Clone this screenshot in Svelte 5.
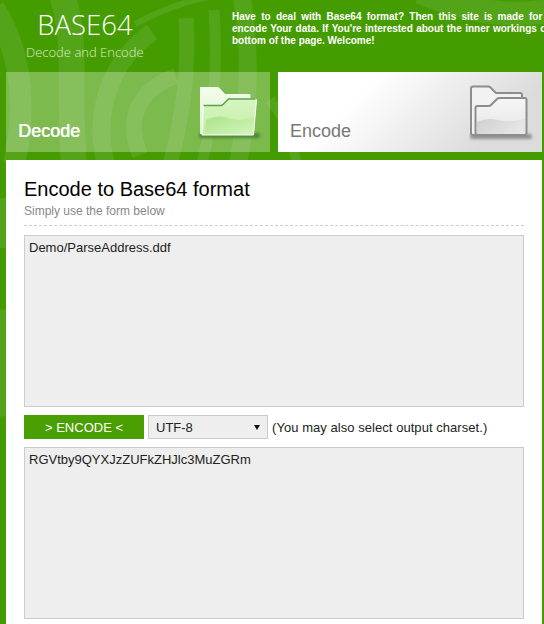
<script lang="ts">
  let input = $state('Demo/ParseAddress.ddf');
  let output = $state('RGVtby9QYXJzZUFkZHJlc3MuZGRm');
  let charset = $state('UTF-8');
  const charsets = ['UTF-8', 'ASCII', 'ISO-8859-1', 'UTF-16'];
</script>

<div class="page">
  <svg class="swirl" width="544" height="624" viewBox="0 0 544 624" aria-hidden="true">
    <g fill="none" stroke="#53a418">
      <path d="M-6 8C20 50 28 100 14 165" stroke-width="22" />
      <path d="M62 -5C78 40 68 100 74 165" stroke-width="26" />
      <path d="M106 165C92 110 112 60 152 32" stroke-width="18" />
      <path d="M140 155C124 115 142 88 176 76" stroke-width="16" />
      <path d="M186 18C189 70 184 110 170 165" stroke-width="15" />
      <path d="M214 10C218 70 214 110 202 165" stroke-width="11" />
      <path d="M242 -2C252 60 248 110 238 165" stroke-width="18" />
      <path d="M135 24Q190 -6 252 -8" stroke-width="6" />
      <path d="M270 100Q294 130 296 165" stroke-width="10" />
      <path d="M420 -8Q500 25 560 8" stroke-width="24" />
      <path d="M0 223H12" stroke-width="50" />
      <path d="M0 363H12" stroke-width="107" />
    </g>
  </svg>

  <header class="top">
    <div class="logo">
      <div class="name">BASE64</div>
      <div class="sub">Decode and Encode</div>
    </div>
    <div class="intro">
      <p class="first">Have to deal with Base64 format? Then this site is made for You! It can decode</p>
      <p class="second">encode Your data. If You're interested about the inner workings of Base64, read at the</p>
      <p>bottom of the page. Welcome!</p>
    </div>
  </header>

  <nav class="tabs">
    <div class="tab decode">
      <span>Decode</span>
      <svg class="folder" width="66" height="58" viewBox="0 0 66 58" aria-hidden="true">
        <defs>
          <linearGradient id="dec-back" x1="0" y1="0" x2="0" y2="1">
            <stop offset="0" stop-color="#f4fdee" />
            <stop offset="1" stop-color="#d8f5c6" />
          </linearGradient>
          <linearGradient id="dec-front" x1="0" y1="0" x2="0" y2="1">
            <stop offset="0" stop-color="#d6f5c0" />
            <stop offset="1" stop-color="#c4efa8" />
          </linearGradient>
          <linearGradient id="dec-shade" x1="0" y1="0" x2="1" y2="1">
            <stop offset="0" stop-color="#a9e388" />
            <stop offset="1" stop-color="#d4f5bd" />
          </linearGradient>
          <filter id="dec-blur" x="-20%" y="-100%" width="140%" height="300%">
            <feGaussianBlur stdDeviation="1.4" />
          </filter>
        </defs>
        <rect x="2" y="49" width="61" height="5" rx="2" fill="#4d8536" filter="url(#dec-blur)" />
        <path d="M3 3h17q1.500 0 2.500 1l5.500 6h24q1.500 0 1.500 1.500V50H3z" fill="url(#dec-back)" />
        <path d="M6.500 21.500h17q1.500 0 2.500-1l5.500-5.500h27q1 0 1 1l-3 35H5z" fill="url(#dec-front)" stroke="#fff" stroke-width="1" />
        <path d="M6.500 21.500h17q1.500 0 2.500-1l5.500-5.500h27" fill="none" stroke="#5f9f45" stroke-width="1.500" />
        <path d="M8 50l1.200-14q12-6 22-2t26-.5l-1.500 16.500z" fill="url(#dec-shade)" />
      </svg>
    </div>
    <div class="tab encode">
      <span>Encode</span>
      <svg class="folder" width="66" height="58" viewBox="0 0 66 58" aria-hidden="true">
        <defs>
          <linearGradient id="enc-front" x1="0" y1="0" x2="0" y2="1">
            <stop offset="0" stop-color="#f6f6f6" />
            <stop offset="1" stop-color="#e4e4e4" />
          </linearGradient>
          <linearGradient id="enc-shade" x1="0" y1="0" x2="1" y2="0.4">
            <stop offset="0" stop-color="#cfcfcf" />
            <stop offset="1" stop-color="#e6e6e6" />
          </linearGradient>
          <filter id="enc-blur" x="-20%" y="-100%" width="140%" height="300%">
            <feGaussianBlur stdDeviation="1.4" />
          </filter>
        </defs>
        <rect x="1" y="50" width="62" height="5" rx="2" fill="#8f8f8f" filter="url(#enc-blur)" />
        <path d="M2 4.500q0-2 2-2h15q1.500 0 2.500 1l5.500 5.500h24q2 0 2 2V51H4q-2 0-2-2z" fill="#f2f2f2" stroke="#8d8d8d" stroke-width="2" />
        <path d="M6.500 24q0-2 2-2h11q1.500 0 2.500-1l6-6q1-1 2.500-1h25q2 0 2 2v33q0 2-2 2H8.500q-2 0-2-2z" fill="url(#enc-front)" stroke="#8d8d8d" stroke-width="2" />
        <path d="M8 50V38q11-5 21-2t27-1v15z" fill="url(#enc-shade)" />
      </svg>
    </div>
  </nav>

  <main class="content">
    <h1>Encode to Base64 format</h1>
    <p class="hint">Simply use the form below</p>
    <textarea bind:value={input} spellcheck="false"></textarea>
    <div class="controls">
      <button type="button">&gt; ENCODE &lt;</button>
      <div class="picker">
        <select bind:value={charset}>
          {#each charsets as c}
            <option>{c}</option>
          {/each}
        </select>
      </div>
      <span class="note">(You may also select output charset.)</span>
    </div>
    <textarea bind:value={output} spellcheck="false"></textarea>
  </main>
</div>

<style>
  :global(body) {
    margin: 0;
    overflow: hidden;
  }

  .page {
    position: relative;
    width: 544px;
    height: 624px;
    overflow: hidden;
    background: #459c00;
    font-family: "Liberation Sans", Arial, sans-serif;
  }

  .swirl {
    position: absolute;
    left: 0;
    top: 0;
  }

  .top {
    position: relative;
    display: flex;
    height: 72px;
  }

  .logo {
    width: 232px;
    flex: none;
    box-sizing: border-box;
    padding: 6px 0 0 26px;
    color: #fff;
    font-family: "Open Sans", sans-serif;
    font-weight: 300;
  }

  .name {
    width: 118px;
    text-align: center;
    font-size: 27.500px;
    line-height: 38px;
  }

  .sub {
    font-size: 13px;
    line-height: 16px;
    color: #dbeccb;
    white-space: nowrap;
  }

  .intro {
    flex: none;
    width: 330px;
    padding-top: 11px;
    color: #fff;
    font-size: 10px;
    font-weight: 700;
    line-height: 12px;
  }

  .intro p {
    margin: 0;
    white-space: nowrap;
  }

  .intro .first {
    word-spacing: 2.500px;
  }

  .intro .second {
    word-spacing: 0.600px;
  }

  .tabs {
    position: relative;
    display: flex;
    gap: 8px;
    height: 80px;
    padding: 0 2px 8px 6px;
  }

  .tab {
    flex: 1;
    display: flex;
    align-items: flex-end;
    justify-content: space-between;
    padding: 0 7px 10px 12px;
    font-size: 18px;
  }

  .tab span {
    line-height: 20px;
    margin-bottom: 1px;
  }

  .decode {
    background: rgba(255, 255, 255, 0.3);
    color: #fff;
    text-shadow: 0.400px 0 0 #fff;
  }

  .encode {
    background: linear-gradient(135deg, #fff 30%, #dcdcdc 80%);
    color: #777;
  }

  .content {
    position: relative;
    margin: 0 2px 0 6px;
    padding: 17px 18px 0;
    height: 464px;
    box-sizing: border-box;
    background: #fff;
  }

  h1 {
    margin: 0;
    font-size: 20px;
    font-weight: 400;
    line-height: 24px;
    color: #000;
  }

  .hint {
    margin: 3px 0 0;
    padding-bottom: 7px;
    border-bottom: 1px dashed #ccc;
    font-size: 12px;
    line-height: 14px;
    color: #888;
  }

  textarea {
    display: block;
    width: 100%;
    height: 172px;
    box-sizing: border-box;
    margin: 0;
    padding: 3px 4px;
    border: 1px solid #ccc;
    border-radius: 0;
    outline: none;
    resize: none;
    background: #eee;
    color: #222;
    font-family: inherit;
    font-size: 13px;
    line-height: 18px;
  }

  .hint + textarea {
    margin-top: 9px;
  }

  .controls {
    display: flex;
    align-items: center;
    gap: 4px;
    height: 24px;
    margin: 8px 0;
  }

  button {
    width: 120px;
    height: 24px;
    padding: 0;
    border: 0;
    background: #4a9f00;
    color: #fff;
    font-family: inherit;
    font-size: 13px;
  }

  .picker {
    position: relative;
  }

  .picker::after {
    content: "";
    position: absolute;
    right: 8px;
    top: 10px;
    border-style: solid;
    border-width: 5px 3px 0;
    border-color: #111 transparent transparent;
  }

  select {
    display: block;
    width: 120px;
    height: 24px;
    box-sizing: border-box;
    padding: 0 0 0 7px;
    border: 1px solid #ccc;
    border-radius: 0;
    appearance: none;
    background: #eee;
    color: #222;
    font-family: inherit;
    font-size: 13px;
  }

  .note {
    font-size: 13px;
    letter-spacing: 0.050px;
    color: #222;
    white-space: nowrap;
  }
</style>
